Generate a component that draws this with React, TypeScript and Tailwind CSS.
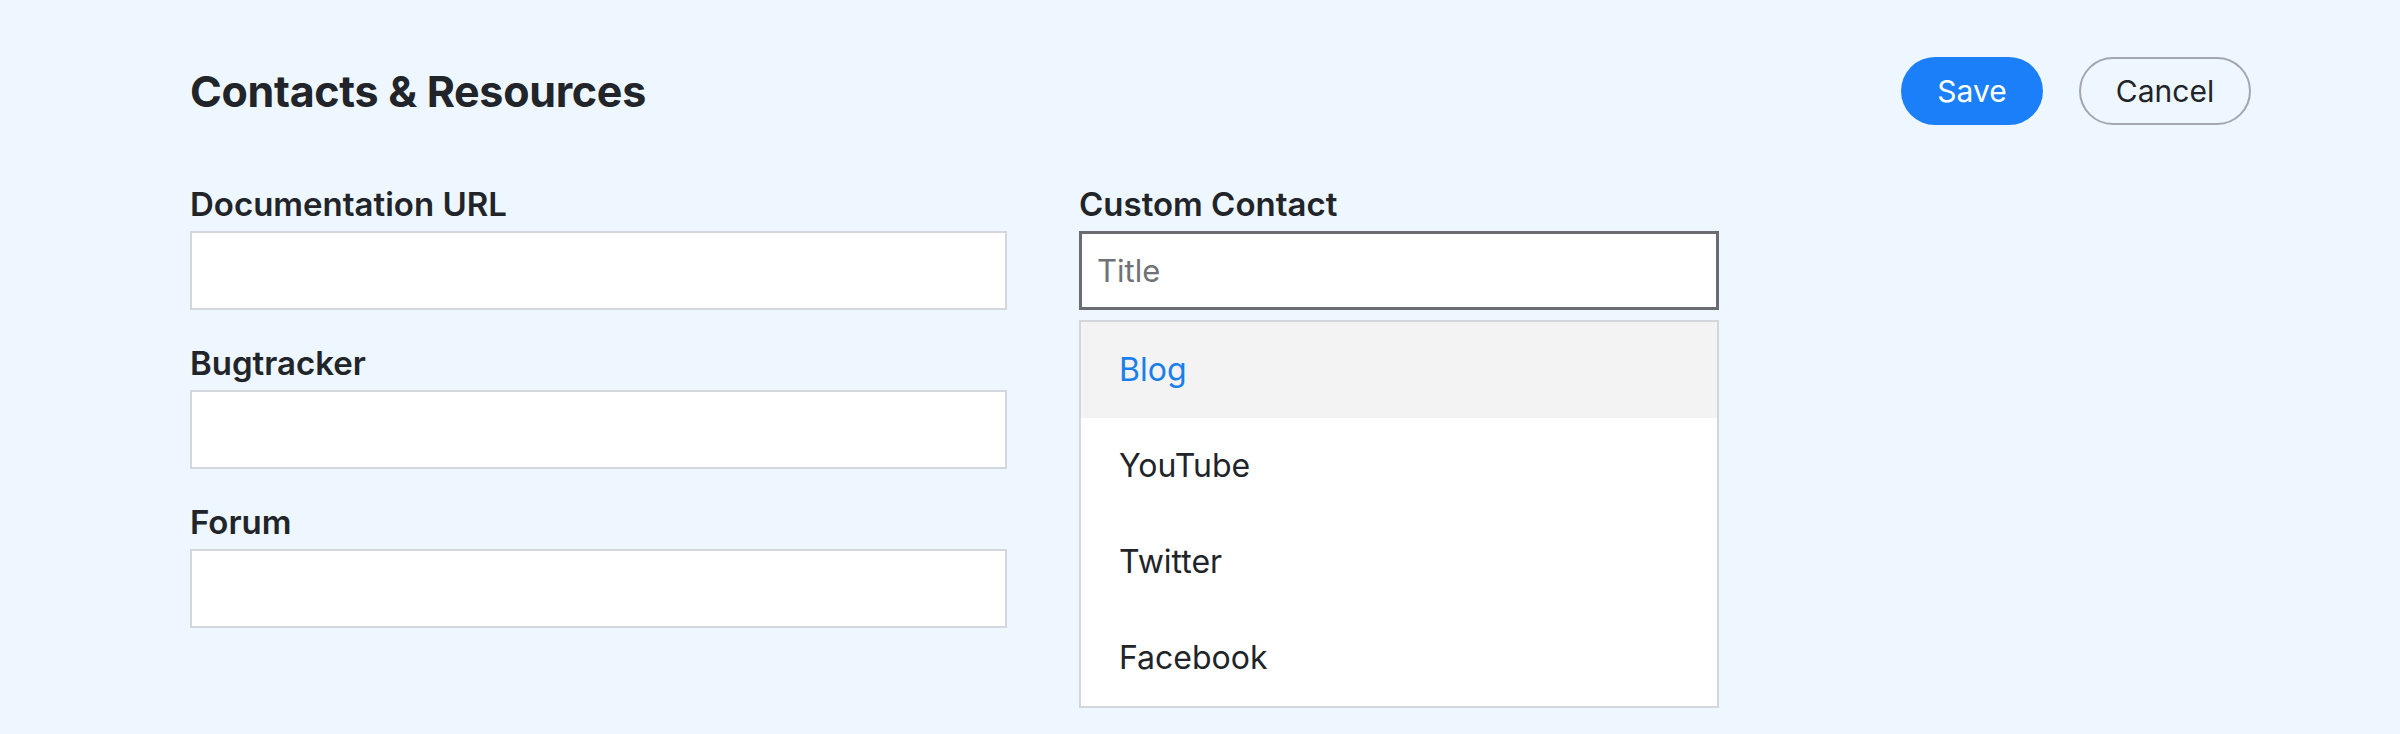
import { useState } from 'react'

const options = ['Blog', 'YouTube', 'Twitter', 'Facebook']

function Field({ label }: { label: string }) {
  return (
    <div className="mt-[33px] flex flex-col">
      <label className="text-[33px] leading-[40px] font-semibold text-[#212529]">{label}</label>
      <input
        type="text"
        className="mt-[7px] h-[79px] w-full border-2 border-[#d3d6da] bg-white px-4 text-[30px] outline-none"
      />
    </div>
  )
}

export default function App() {
  const [active] = useState(0)

  return (
    <div
      className="min-h-[734px] w-full bg-[#eef6ff] pt-[57px] pl-[190px] pr-[149px] text-[#212529]"
      style={{ fontFamily: 'Inter, "Noto Sans", sans-serif' }}
    >
      <div className="flex h-[68px] items-center justify-between">
        <h1 className="text-[43px] font-bold tracking-[-0.3px]">Contacts &amp; Resources</h1>
        <div className="flex items-center gap-[36px]">
          <button className="h-[68px] w-[142px] rounded-full bg-[#1a7ff8] text-[30px] text-white">Save</button>
          <button className="h-[68px] w-[172px] rounded-full border-2 border-[#a3a7ad] text-[30px] text-[#212529]">
            Cancel
          </button>
        </div>
      </div>

      <div className="mt-[26px] flex gap-[72px]">
        <div className="flex w-[817px] flex-col">
          <Field label="Documentation URL" />
          <Field label="Bugtracker" />
          <Field label="Forum" />
        </div>

        <div className="mt-[33px] flex w-[640px] flex-col">
          <label className="text-[33px] leading-[40px] font-semibold text-[#212529]">Custom Contact</label>
          <input
            type="text"
            placeholder="Title"
            className="mt-[7px] h-[79px] w-full border-[3px] border-[#6a6c70] bg-white px-[15px] text-[31px] outline-none placeholder:text-[#6f7276]"
          />
          <ul className="mt-[10px] border-2 border-[#d3d6da] bg-white">
            {options.map((o, i) => (
              <li
                key={o}
                className={
                  i === active
                    ? 'flex h-[96px] items-center bg-[#f3f3f3] pl-[38px] text-[32px] text-[#1a7fe8]'
                    : 'flex h-[96px] items-center pl-[38px] text-[32px] text-[#212529]'
                }
              >
                {o}
              </li>
            ))}
          </ul>
        </div>
      </div>
    </div>
  )
}
